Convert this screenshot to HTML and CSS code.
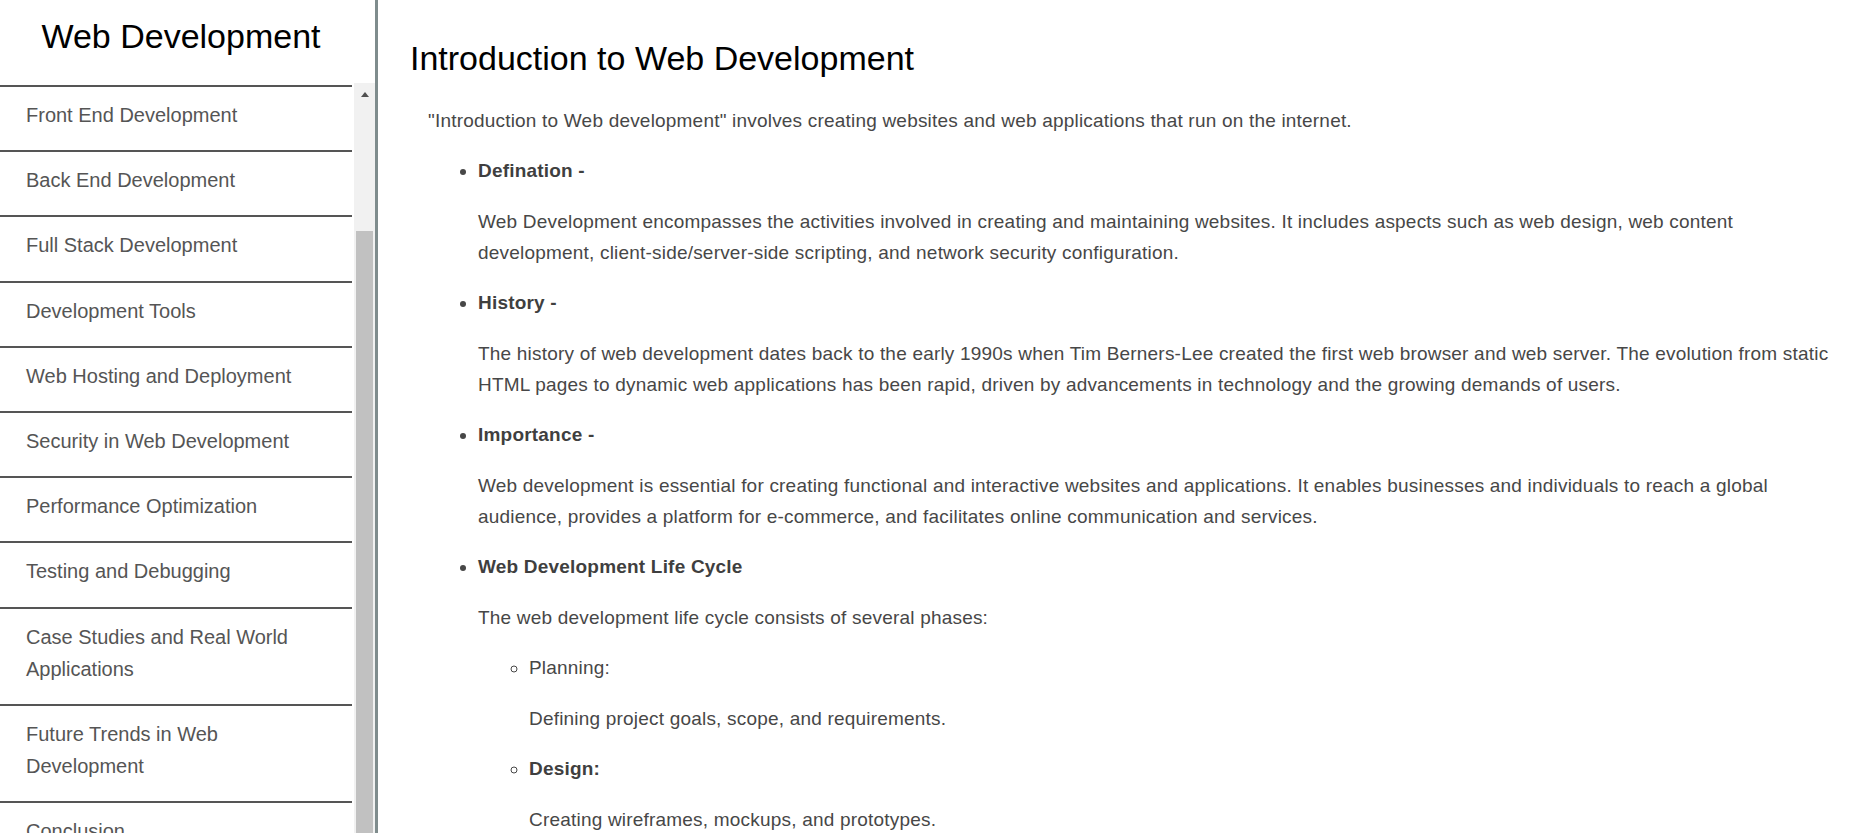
FILE: index.html
```html
<!DOCTYPE html>
<html lang="en">
<head>
<meta charset="utf-8">
<title>Web Development</title>
<link rel="stylesheet" href="styles.css">
</head>
<body>
<div class="layout">
  <aside class="sidebar">
    <h2 class="side-title">Web Development</h2>
    <div class="side-body">
      <ul class="nav">
        <li>Front End Development</li>
        <li>Back End Development</li>
        <li>Full Stack Development</li>
        <li>Development Tools</li>
        <li>Web Hosting and Deployment</li>
        <li>Security in Web Development</li>
        <li>Performance Optimization</li>
        <li>Testing and Debugging</li>
        <li>Case Studies and Real World Applications</li>
        <li>Future Trends in Web Development</li>
        <li>Conclusion</li>
      </ul>
      <div class="scrollbar"><span class="arrow"></span><span class="thumb"></span></div>
    </div>
  </aside>
  <main class="content">
    <h1>Introduction to Web Development</h1>
    <p class="intro">"Introduction to Web development" involves creating websites and web applications that run on the internet.</p>
    <ul class="topics">
      <li>
        <div class="label">Defination -</div>
        <p>Web Development encompasses the activities involved in creating and maintaining websites. It includes aspects such as web design, web content development, client-side/server-side scripting, and network security configuration.</p>
      </li>
      <li>
        <div class="label">History -</div>
        <p>The history of web development dates back to the early 1990s when Tim Berners-Lee created the first web browser and web server. The evolution from static HTML pages to dynamic web applications has been rapid, driven by advancements in technology and the growing demands of users.</p>
      </li>
      <li>
        <div class="label">Importance -</div>
        <p>Web development is essential for creating functional and interactive websites and applications. It enables businesses and individuals to reach a global audience, provides a platform for e-commerce, and facilitates online communication and services.</p>
      </li>
      <li>
        <div class="label">Web Development Life Cycle</div>
        <p>The web development life cycle consists of several phases:</p>
        <ul class="sub">
          <li>
            <div class="label plain">Planning:</div>
            <p>Defining project goals, scope, and requirements.</p>
          </li>
          <li>
            <div class="label">Design:</div>
            <p>Creating wireframes, mockups, and prototypes.</p>
          </li>
          <li>
            <div class="label">Development:</div>
            <p>Writing code and building the website or application.</p>
          </li>
          <li>
            <div class="label">Testing:</div>
            <p>Ensuring functionality, performance, and security.</p>
          </li>
        </ul>
      </li>
    </ul>
  </main>
</div>
</body>
</html>
```
FILE: styles.css
```css
html, body {
  margin: 0;
  height: 100%;
  overflow: hidden;
}

body {
  font-family: "Liberation Sans", Arial, sans-serif;
  background: #fff;
}

.layout {
  display: flex;
  height: 100vh;
}

.sidebar {
  flex: 0 0 375px;
  width: 375px;
  border-right: 3px solid #7f8c8d;
  display: flex;
  flex-direction: column;
  overflow: hidden;
}

.side-title {
  margin: 0;
  height: 83px;
  box-sizing: border-box;
  padding: 16px 13px 0 0;
  font-size: 34px;
  line-height: 40px;
  font-weight: normal;
  text-align: center;
  color: #000;
}

.side-body {
  display: flex;
  gap: 2px;
  flex: 1;
  min-height: 0;
}

.nav {
  list-style: none;
  margin: 0;
  padding: 2px 0 0;
  flex: 0 0 352px;
  width: 352px;
}

.nav li {
  border-top: 2px solid #555;
  padding: 12px 26px 19px;
  font-size: 20px;
  line-height: 32.2px;
  color: #555;
}

.scrollbar {
  flex: 0 0 21px;
  width: 21px;
  background: #f1f1f1;
  display: flex;
  flex-direction: column;
  align-items: center;
  padding-top: 9px;
  box-sizing: border-box;
}

.arrow {
  width: 0;
  height: 0;
  border-left: 4.5px solid transparent;
  border-right: 4.5px solid transparent;
  border-bottom: 5px solid #505050;
}

.thumb {
  width: 17px;
  margin-top: 134px;
  flex: 1;
  background: #c1c1c1;
}

.content {
  flex: 1;
  min-width: 0;
  padding: 38px 40px 0 32px;
  color: #474747;
  font-size: 19px;
  letter-spacing: 0.2px;
  line-height: 31px;
  overflow: hidden;
}

.content h1 {
  margin: 0 0 26px;
  font-size: 34px;
  line-height: 41px;
  letter-spacing: 0;
  font-weight: normal;
  color: #000;
}

.intro {
  margin: 0 0 19px;
  padding-left: 18px;
}

.topics {
  margin: 0;
  padding-left: 68px;
}

.label {
  font-weight: bold;
  color: #3f3f3f;
}

.label.plain {
  font-weight: normal;
  color: #474747;
}

.topics p {
  margin: 20px 0 19px;
}

.sub {
  list-style: circle;
  margin: 0;
  padding-left: 51px;
}
```
